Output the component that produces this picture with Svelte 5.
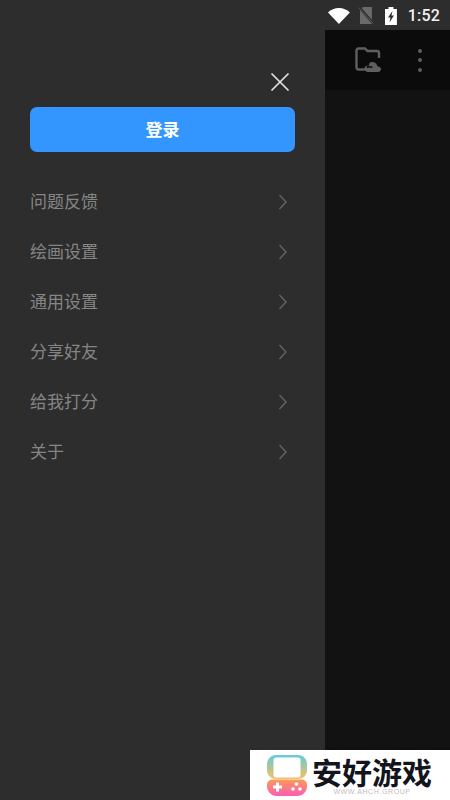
<script lang="ts">
	const menuItems = ['问题反馈', '绘画设置', '通用设置', '分享好友', '给我打分', '关于'];
</script>

<main class="screen">
	<aside class="drawer">
		<div class="close-row">
			<svg width="20" height="20" viewBox="0 0 20 20" aria-label="关闭">
				<path d="M1.500 1.500 18.500 18.500M18.500 1.500 1.500 18.500" stroke="#e2e2e2" stroke-width="1.700" fill="none" />
			</svg>
		</div>
		<button class="login" type="button">登录</button>
		<nav class="menu">
			{#each menuItems as item}
				<div class="menu-item">
					<span>{item}</span>
					<svg width="10" height="16" viewBox="0 0 10 16">
						<path d="M1.500 1 8 8 1.500 15" stroke="#626262" stroke-width="1.500" fill="none" />
					</svg>
				</div>
			{/each}
		</nav>
	</aside>

	<section class="content">
		<div class="status-bar">
			<svg class="wifi" width="22" height="16" viewBox="0 0 22 16">
				<path d="M0 4.500C3 1.700 6.800 0 11 0S19 1.700 22 4.500L11 16Z" fill="#fff" />
			</svg>
			<svg class="sim" width="16" height="17" viewBox="0 0 16 17">
				<path d="M5 0H14V17H2V3Z" fill="#6a6a6a" />
				<path d="M1 0 15.500 16.500" stroke="#2d2d2d" stroke-width="2.600" />
				<path d="M0.500 0.500 15.500 16.500" stroke="#5a5a5a" stroke-width="1" />
			</svg>
			<svg class="battery" width="12" height="18" viewBox="0 0 12 18">
				<path d="M3.500 0H8.500V2H12V18H0V2H3.500Z" fill="#fff" />
				<path d="M7.500 4 3 10.500H5.500L4.500 15.500 9 8.500H6.500Z" fill="#2d2d2d" />
			</svg>
			<span class="clock">1:52</span>
		</div>
		<div class="toolbar">
			<svg width="28" height="28" viewBox="0 0 28 28">
				<path d="M12 23.500H4.500C3.400 23.500 2.500 22.600 2.500 21.500V4.500C2.500 3.400 3.400 2.500 4.500 2.500H11L13.500 5H23C24.100 5 25 5.900 25 7V12" stroke="#5f5f5f" stroke-width="2.400" fill="none" />
				<path d="M14 26C11.800 26 10.500 24.500 10.500 22.800S11.800 19.800 13.300 19.600C14 17.500 15.900 16 18.200 16C20.900 16 23 17.900 23.300 20.300C25.500 20.500 27 21.600 27 23.200C27 24.800 25.600 26 24 26Z" fill="#5f5f5f" />
				<path d="M15 16.500 13.500 21H18.500" stroke="#0b0b0b" stroke-width="1.500" fill="none" />
			</svg>
			<div class="more" aria-label="更多">
				<i></i><i></i><i></i>
			</div>
		</div>
		<div class="canvas"></div>
		<div class="bottom-bar">
			<svg width="24" height="8" viewBox="0 0 24 8">
				<path d="M1 7C6 3 13 1 22 1" stroke="#5a5a5a" stroke-width="2" fill="none" />
			</svg>
		</div>
	</section>

	<div class="watermark">
		<svg width="40" height="41" viewBox="0 0 40 41">
			<defs>
				<linearGradient id="top" x1="0" y1="0" x2="0" y2="1">
					<stop offset="0" stop-color="#62cbdc" />
					<stop offset="1" stop-color="#f8bf5c" />
				</linearGradient>
				<linearGradient id="bottom" x1="0" y1="0" x2="0" y2="1">
					<stop offset="0" stop-color="#fd9a55" />
					<stop offset="1" stop-color="#fb5db6" />
				</linearGradient>
			</defs>
			<path d="M9 0H31C36 0 40 4 40 9V15C40 20 36 24 31 24H9C4 24 0 20 0 15V9C0 4 4 0 9 0Z" fill="url(#top)" />
			<path d="M9 2.500H31C32.500 2.500 33.500 3.500 33.500 5V20C33.500 21.500 32.500 22.500 31 22.500H9C7.500 22.500 6.500 21.500 6.500 20V5C6.500 3.500 7.500 2.500 9 2.500Z" fill="#fff" />
			<path d="M0 30C0 26 3 24.500 6 24.500H34C37 24.500 40 26 40 30V31C40 36.500 36 41 30 41H10C4 41 0 36.500 0 31Z" fill="url(#bottom)" />
			<path d="M6 32H15M10.500 27.500V36.500" stroke="#fff" stroke-width="3" />
			<circle cx="26" cy="34" r="1.800" fill="#fff" />
			<circle cx="33" cy="34" r="1.800" fill="#fff" />
			<circle cx="29.500" cy="29" r="1.800" fill="#fff" />
		</svg>
		<div class="brand">
			<strong>安好游戏</strong>
			<small>WWW.AHCH.GROUP</small>
		</div>
	</div>
</main>

<style>
	:global(body) {
		margin: 0;
		background: #2d2d2d;
		font-family: 'Noto Sans CJK SC', 'Liberation Sans', sans-serif;
	}

	.screen {
		position: relative;
		display: flex;
		width: 450px;
		height: 800px;
		overflow: hidden;
	}

	.drawer {
		flex: 0 0 325px;
		box-sizing: border-box;
		padding: 72px 30px 0;
		background: #2d2d2d;
	}

	.close-row {
		display: flex;
		justify-content: flex-end;
		height: 20px;
		padding-right: 5px;
	}

	.login {
		display: block;
		width: 265px;
		height: 45px;
		margin-top: 15px;
		padding: 0 0 3px;
		border: 0;
		border-radius: 7px;
		background: #3396ff;
		color: #fff;
		font: 700 17px 'Noto Sans CJK SC', sans-serif;
	}

	.menu {
		margin-top: 25px;
	}

	.menu-item {
		display: flex;
		align-items: center;
		justify-content: space-between;
		height: 50px;
		padding-right: 7px;
		color: #858585;
		font-size: 17px;
	}

	.menu-item span {
		margin-top: -3px;
	}

	.content {
		flex: 1;
		display: flex;
		flex-direction: column;
		min-width: 0;
	}

	.status-bar {
		flex: 0 0 30px;
		display: flex;
		align-items: center;
		box-sizing: border-box;
		padding: 0 10px 0 3px;
		background: #2d2d2d;
	}

	.wifi {
		margin-top: 1px;
	}

	.sim {
		margin: 1px 0 0 8px;
	}

	.battery {
		margin: 1px 0 0 11px;
	}

	.clock {
		margin-left: 11px;
		color: #f2f2f2;
		font: 500 16px Roboto, sans-serif;
		letter-spacing: 0.2px;
	}

	.toolbar {
		flex: 0 0 60px;
		display: flex;
		align-items: center;
		gap: 36px;
		padding-left: 29px;
		background: #0b0b0b;
	}

	.more {
		display: flex;
		flex-direction: column;
		gap: 5.500px;
	}

	.more i {
		display: block;
		width: 4px;
		height: 4px;
		border-radius: 50%;
		background: #5f5f5f;
	}

	.canvas {
		flex: 1;
		background: #121212;
	}

	.bottom-bar {
		flex: 0 0 55px;
		box-sizing: border-box;
		padding: 0 0 0 15px;
		background: #111;
	}

	.watermark {
		position: absolute;
		right: 0;
		bottom: 0;
		display: flex;
		align-items: center;
		gap: 5px;
		box-sizing: border-box;
		width: 200px;
		height: 50px;
		padding: 0 0 0 17px;
		background: #fff;
	}

	.brand {
		display: flex;
		flex-direction: column;
		align-items: center;
	}

	.brand strong {
		color: #14141c;
		font-size: 30px;
		font-weight: 700;
		line-height: 34px;
		white-space: nowrap;
	}

	.brand small {
		color: #c4bcc0;
		font: 7px/8px 'Liberation Sans', sans-serif;
		letter-spacing: 0.6px;
	}
</style>
